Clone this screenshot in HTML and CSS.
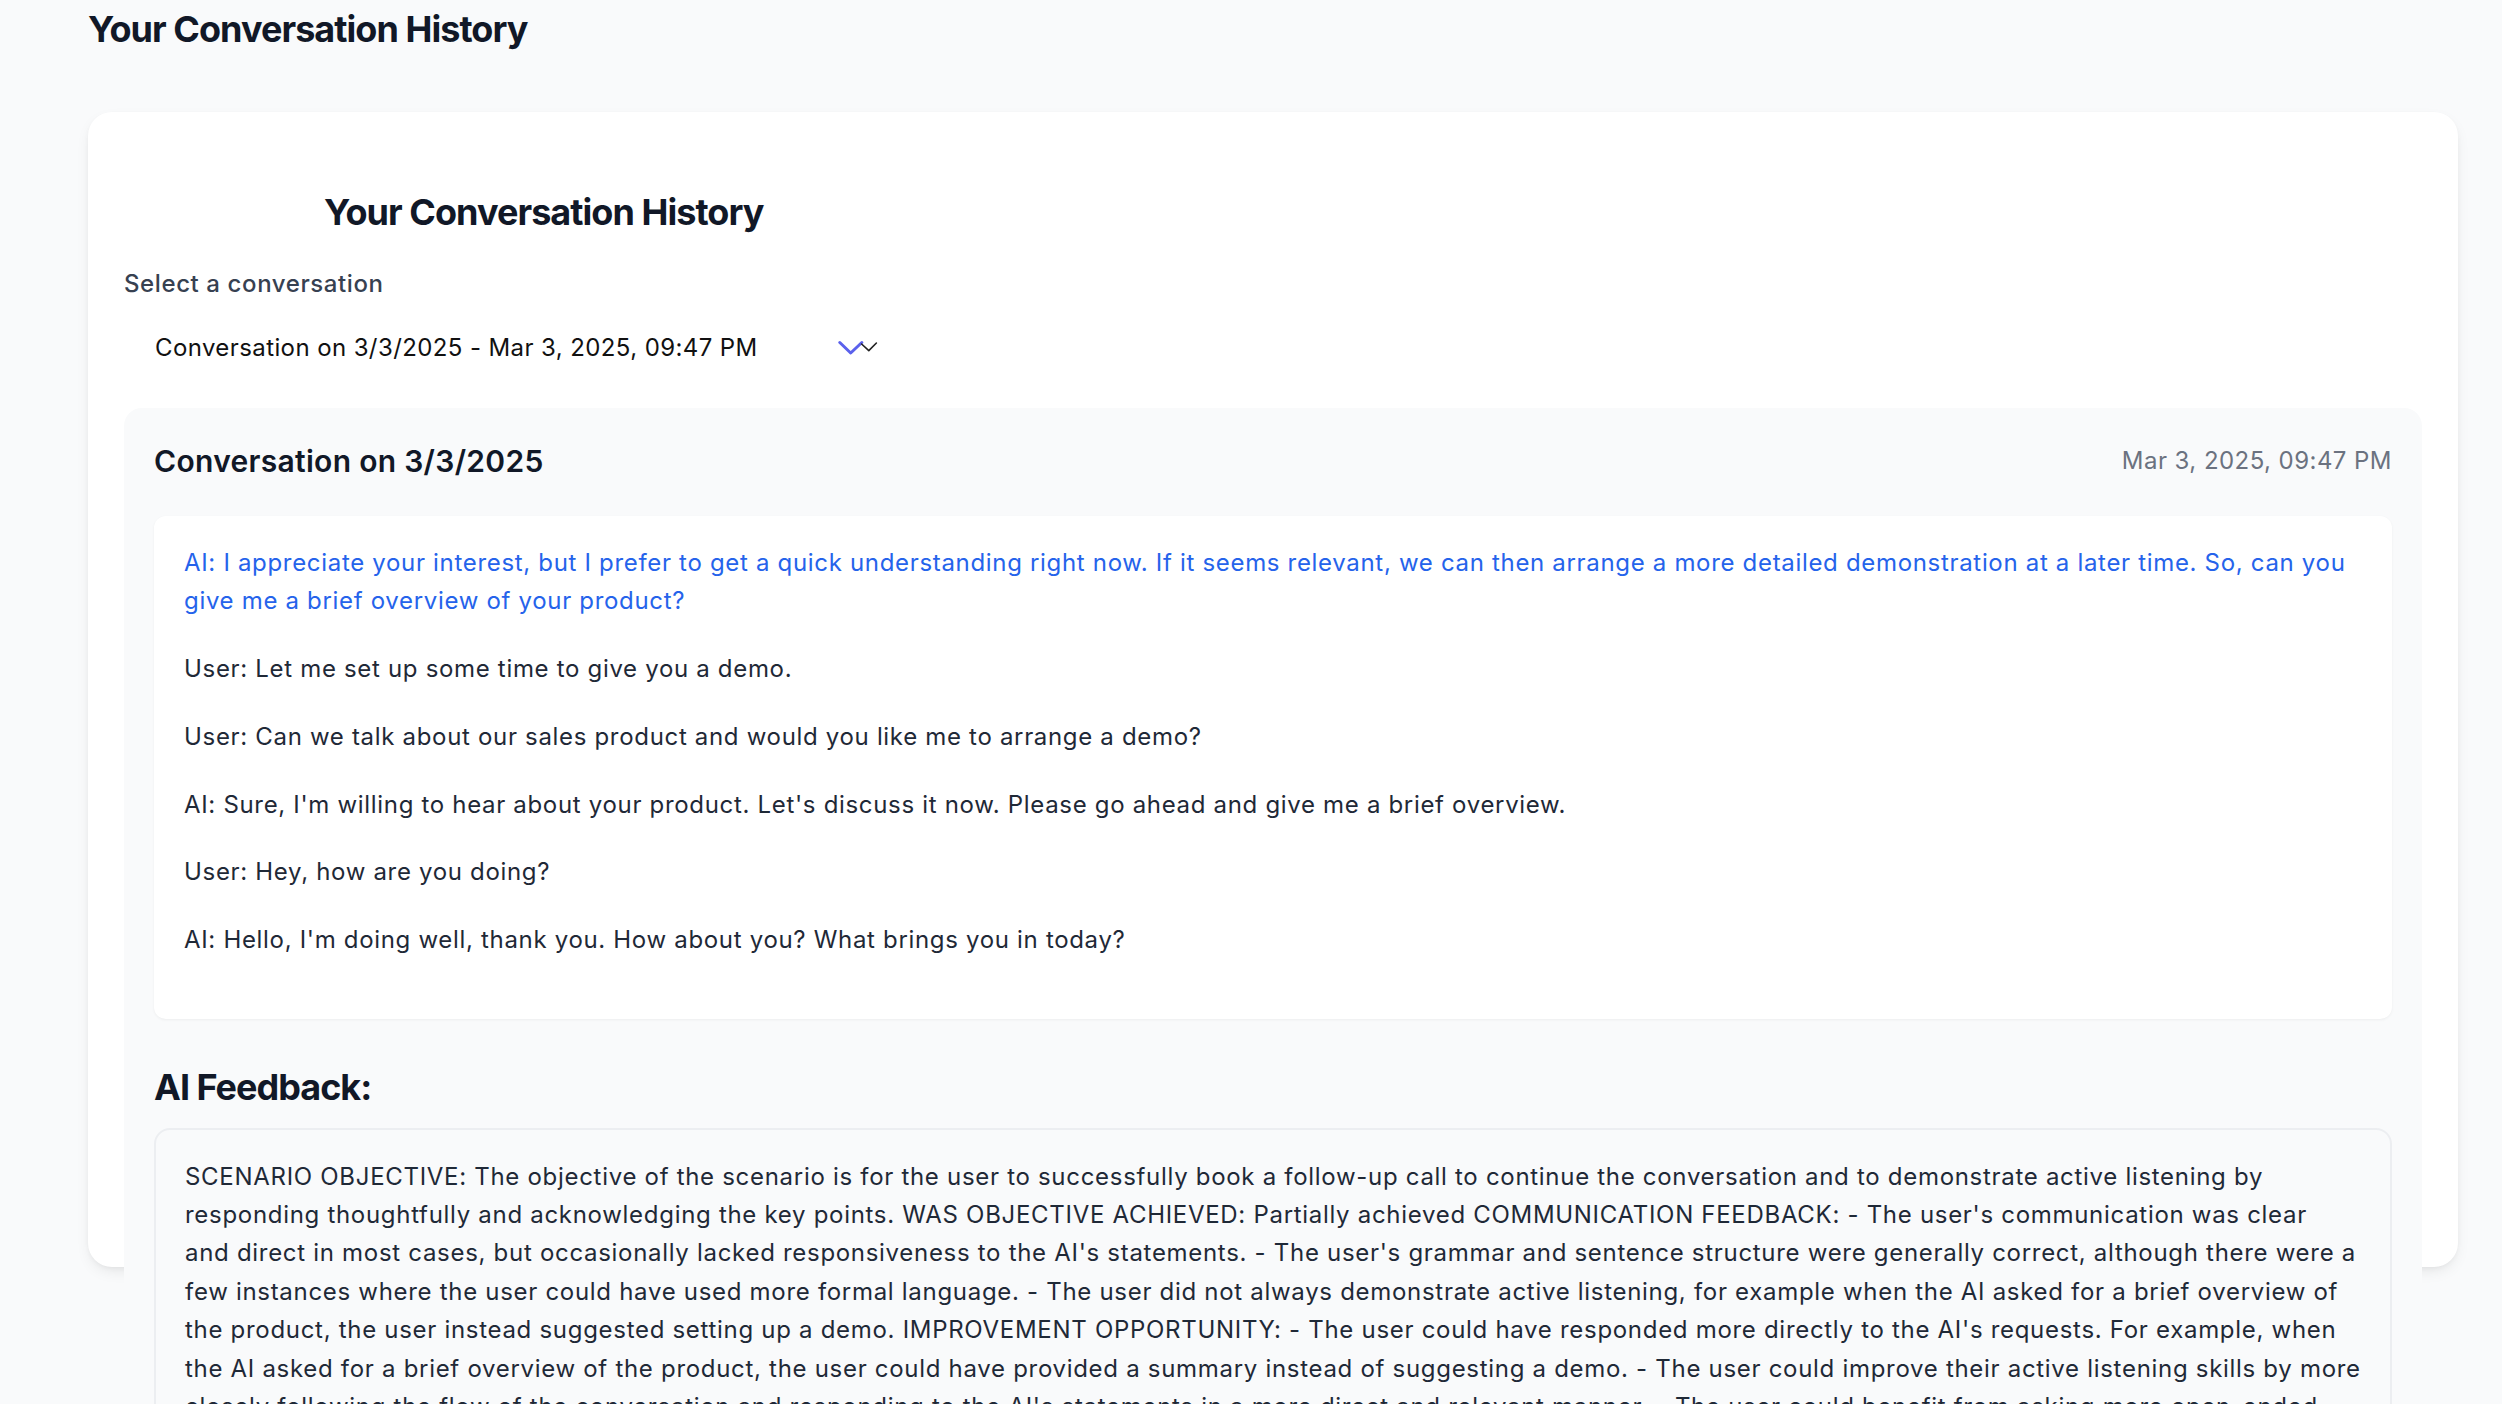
FILE: index.html
```html
<!DOCTYPE html>
<html lang="en">
<head>
<meta charset="utf-8">
<title>Your Conversation History</title>
<link rel="stylesheet" href="styles.css">
</head>
<body>
<main class="page">
  <h1 class="page-title">Your Conversation History</h1>
  <section class="card">
    <div class="card-header">
      <h2 class="card-title">Your Conversation History</h2>
    </div>
    <label class="field-label">Select a conversation</label>
    <div class="select-box">
      <span class="select-value">Conversation on 3/3/2025 - Mar 3, 2025, 09:47 PM</span>
      <svg class="select-chevron" width="40" height="18" viewBox="0 0 40 18" aria-hidden="true">
        <path d="M1.8 3.5 L12.7 14 L23.8 3.5" fill="none" stroke="#5b61ec" stroke-width="3" stroke-linecap="round" stroke-linejoin="round"/>
        <path d="M23.6 5 L30.8 11.6 L38.4 4" fill="none" stroke="#222" stroke-width="1.6" stroke-linecap="round" stroke-linejoin="round"/>
      </svg>
    </div>
    <div class="detail">
      <div class="detail-head">
        <h3 class="detail-title">Conversation on 3/3/2025</h3>
        <span class="detail-time">Mar 3, 2025, 09:47 PM</span>
      </div>
      <div class="messages">
        <p class="msg msg-ai-latest">AI: I appreciate your interest, but I prefer to get a quick understanding right now. If it seems relevant, we can then arrange a more detailed demonstration at a later time. So, can you give me a brief overview of your product?</p>
        <p class="msg">User: Let me set up some time to give you a demo.</p>
        <p class="msg">User: Can we talk about our sales product and would you like me to arrange a demo?</p>
        <p class="msg">AI: Sure, I'm willing to hear about your product. Let's discuss it now. Please go ahead and give me a brief overview.</p>
        <p class="msg">User: Hey, how are you doing?</p>
        <p class="msg">AI: Hello, I'm doing well, thank you. How about you? What brings you in today?</p>
      </div>
      <h3 class="feedback-title">AI Feedback:</h3>
      <div class="feedback">SCENARIO OBJECTIVE: The objective of the scenario is for the user to successfully book a follow-up call to continue the conversation and to demonstrate active listening by responding thoughtfully and acknowledging the key points. WAS OBJECTIVE ACHIEVED: Partially achieved COMMUNICATION FEEDBACK: - The user's communication was clear and&nbsp;direct in most cases, but occasionally lacked responsiveness to the AI's statements. - The user's grammar and sentence structure were generally correct, although there were a few instances where the user could have used more formal language. - The user did not always demonstrate active listening, for example when the AI asked for a brief overview of the product, the user instead suggested setting up a demo. IMPROVEMENT OPPORTUNITY: - The user could have responded more directly to the AI's requests. For example, when the AI asked for a brief overview of the product, the user could have provided a summary instead of suggesting a demo. - The user could improve their active listening skills by more closely following the flow of the conversation and responding to the AI's statements in a more direct and relevant manner. - The user could benefit from asking more open-ended questions to better fit the needs of the AI and guide the conversation toward a follow-up call.</div>
    </div>
  </section>
</main>
</body>
</html>
```

FILE: styles.css
```css
html, body {
  margin: 0;
  padding: 0;
  background: #f9fafb;
}

body {
  font-family: Inter, "Liberation Sans", sans-serif;
  color: #1f2937;
}

.page {
  height: 1404px;
  overflow: hidden;
  box-sizing: border-box;
  padding: 5px 44px 0 88px;
}

.page-title {
  margin: 0;
  font-size: 36px;
  line-height: 48px;
  font-weight: 700;
  color: #111827;
  letter-spacing: -0.95px;
}

.card {
  margin-top: 59px;
  height: 1155px;
  box-sizing: border-box;
  padding: 36px 36px 0;
  background: #ffffff;
  border-radius: 24px;
  box-shadow: 0 6px 16px -4px rgba(0, 0, 0, 0.1), 0 2px 6px -2px rgba(0, 0, 0, 0.06);
}

.card-header {
  padding: 40px 0 0 200px;
  margin-bottom: 30px;
}

.card-title {
  margin: 0;
  font-size: 36px;
  line-height: 48px;
  font-weight: 700;
  color: #111827;
  letter-spacing: -0.95px;
}

.field-label {
  display: block;
  font-size: 24px;
  line-height: 36px;
  font-weight: 500;
  letter-spacing: 0.6px;
  color: #374151;
}

.select-box {
  margin-top: 16px;
  width: 766px;
  height: 60px;
  box-sizing: border-box;
  padding: 0 12px 0 31px;
  display: flex;
  align-items: center;
  justify-content: space-between;
  background: #ffffff;
}

.select-value {
  font-size: 24px;
  line-height: 36px;
  letter-spacing: 0.4px;
  color: #111111;
}

.select-chevron {
  display: block;
}

.detail {
  margin-top: 30px;
  padding: 32px 30px 60px;
  background: #f9fafb;
  border-radius: 18px;
}

.detail-head {
  display: flex;
  align-items: center;
  justify-content: space-between;
  margin-bottom: 34px;
}

.detail-title {
  margin: 0;
  font-size: 30px;
  line-height: 42px;
  font-weight: 600;
  letter-spacing: 0.3px;
  color: #111827;
}

.detail-time {
  font-size: 24px;
  line-height: 36px;
  letter-spacing: 0.45px;
  color: #6b7280;
}

.messages {
  background: #ffffff;
  border-radius: 12px;
  padding: 28px 30px 30px;
  box-shadow: 0 1px 3px rgba(0, 0, 0, 0.05);
}

.msg {
  margin: 0 0 29.3px;
  font-size: 24px;
  line-height: 38.4px;
  letter-spacing: 0.68px;
  color: #1f2937;
}

.msg-ai-latest {
  color: #2563eb;
}

.feedback-title {
  margin: 44px 0 17px;
  font-size: 36px;
  line-height: 48px;
  font-weight: 700;
  letter-spacing: -1px;
  color: #111827;
}

.feedback {
  border: 2px solid #eceef1;
  border-radius: 16px;
  background: #f9fafb;
  padding: 28px 26px 28px 29px;
  font-size: 24px;
  line-height: 38.4px;
  letter-spacing: 0.7px;
  color: #1f2937;
}
```
